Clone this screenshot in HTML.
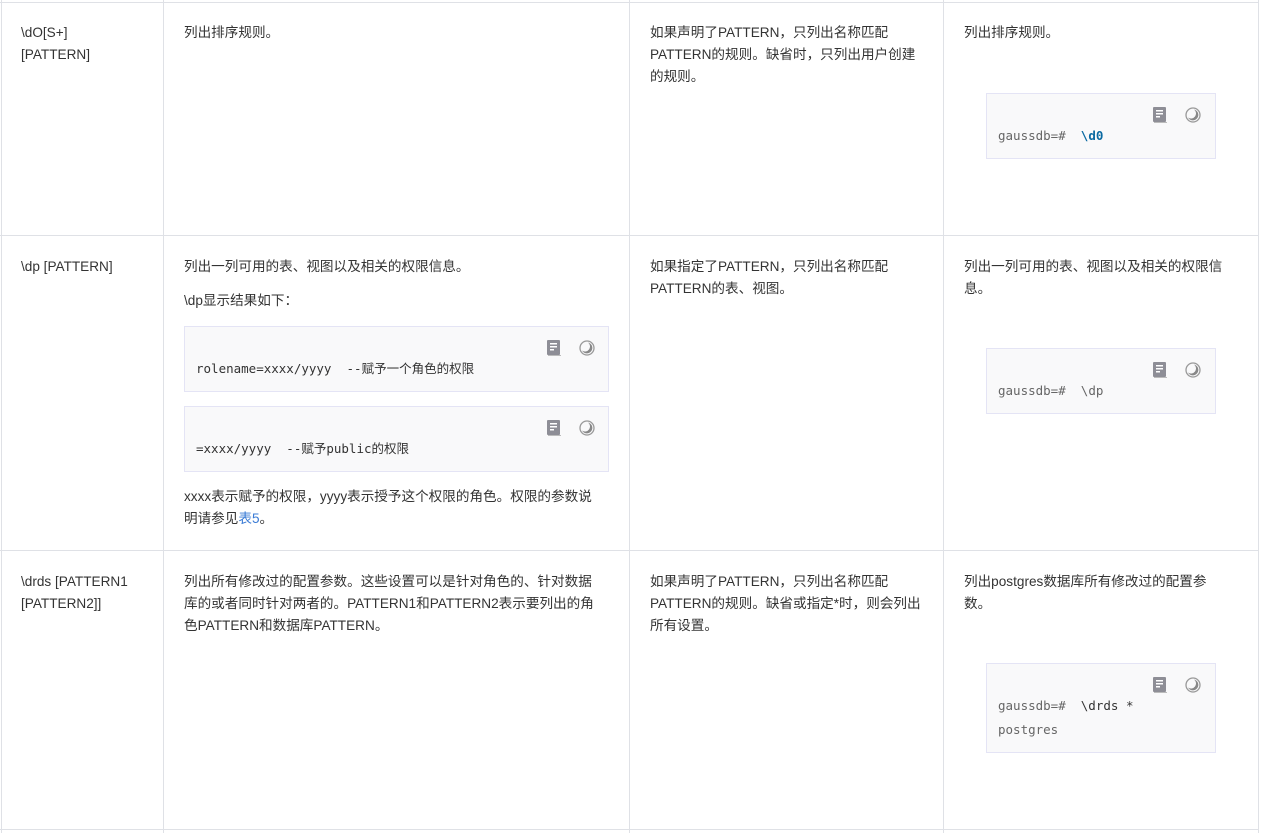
<!DOCTYPE html>
<html><head><meta charset="utf-8"><style>
body{margin:0;width:1262px;height:833px;background:#fff;position:relative;overflow:hidden;font-family:"Liberation Sans","Noto Sans CJK SC",sans-serif;font-size:13.6px;color:#333}
.v{position:absolute;top:0;width:1px;height:833px;background:#dfe1e6}
.h{position:absolute;left:0;width:1259px;height:1px;background:#dfe1e6}
.t{position:absolute;line-height:22px;white-space:nowrap}
.box{position:absolute;background:#f9f9fa;border:1px solid #e4e4f5;box-sizing:border-box}
.code{position:absolute;font-family:"DejaVu Sans Mono","Noto Sans CJK SC",monospace;font-size:12.5px;line-height:24px;white-space:pre;color:#333}
.g{color:#666}.b{color:#0b6aa2;font-weight:bold}
a{color:#3a7bd5;text-decoration:none}
</style></head><body>
<div class="v" style="left:1px"></div><div class="v" style="left:163px"></div><div class="v" style="left:629px"></div><div class="v" style="left:943px"></div><div class="v" style="left:1258px"></div>
<div class="h" style="top:2px"></div><div class="h" style="top:235px"></div><div class="h" style="top:550px"></div><div class="h" style="top:829px"></div>

<svg width="0" height="0" style="position:absolute"><defs>
<g id="icons"><rect x="0" y="0" width="13" height="15" rx="1" fill="#8e8e96"/><rect x="3" y="3" width="7" height="1.5" fill="#fff"/><rect x="3" y="6" width="7" height="1.5" fill="#fff"/><rect x="3" y="9" width="4" height="1.5" fill="#fff"/><rect x="1" y="15" width="13" height="1" fill="#bbb"/>
<circle cx="40" cy="8" r="7" fill="none" stroke="#999" stroke-width="1.3"/><path d="M41 2.5a5.5 5.5 0 1 1-6 8a5 5 0 0 0 6-8z" fill="#888"/></g></defs></svg>

<!-- row 1 -->
<div class="t" style="left:21px;top:22px">\dO[S+]<br>[PATTERN]</div>
<div class="t" style="left:184px;top:22px">列出排序规则。</div>
<div class="t" style="left:650px;top:22px">如果声明了PATTERN，只列出名称匹配<br>PATTERN的规则。缺省时，只列出用户创建<br>的规则。</div>
<div class="t" style="left:964px;top:22px">列出排序规则。</div>
<div class="box" style="left:986px;top:93px;width:230px;height:66px"><svg style="position:absolute;left:166px;top:13px" width="50" height="17"><use href="#icons"/></svg><div class="code" style="left:11px;top:30px"><span class="g">gaussdb=#</span>  <span class="b">\d0</span></div></div>

<!-- row 2 -->
<div class="t" style="left:21px;top:256px">\dp [PATTERN]</div>
<div class="t" style="left:184px;top:256px">列出一列可用的表、视图以及相关的权限信息。</div>
<div class="t" style="left:184px;top:290px">\dp显示结果如下：</div>
<div class="box" style="left:184px;top:326px;width:425px;height:66px"><svg style="position:absolute;left:362px;top:13px" width="50" height="17"><use href="#icons"/></svg><div class="code" style="left:11px;top:30px">rolename=xxxx/yyyy  --赋予一个角色的权限</div></div>
<div class="box" style="left:184px;top:406px;width:425px;height:66px"><svg style="position:absolute;left:362px;top:13px" width="50" height="17"><use href="#icons"/></svg><div class="code" style="left:11px;top:30px">=xxxx/yyyy  --赋予public的权限</div></div>
<div class="t" style="left:184px;top:486px">xxxx表示赋予的权限，yyyy表示授予这个权限的角色。权限的参数说<br>明请参见<a>表5</a>。</div>
<div class="t" style="left:650px;top:256px">如果指定了PATTERN，只列出名称匹配<br>PATTERN的表、视图。</div>
<div class="t" style="left:964px;top:256px">列出一列可用的表、视图以及相关的权限信<br>息。</div>
<div class="box" style="left:986px;top:348px;width:230px;height:66px"><svg style="position:absolute;left:166px;top:13px" width="50" height="17"><use href="#icons"/></svg><div class="code" style="left:11px;top:30px"><span class="g">gaussdb=#</span>  <span class="g">\dp</span></div></div>

<!-- row 3 -->
<div class="t" style="left:21px;top:571px">\drds [PATTERN1<br>[PATTERN2]]</div>
<div class="t" style="left:184px;top:571px">列出所有修改过的配置参数。这些设置可以是针对角色的、针对数据<br>库的或者同时针对两者的。PATTERN1和PATTERN2表示要列出的角<br>色PATTERN和数据库PATTERN。</div>
<div class="t" style="left:650px;top:571px">如果声明了PATTERN，只列出名称匹配<br>PATTERN的规则。缺省或指定*时，则会列出<br>所有设置。</div>
<div class="t" style="left:964px;top:571px">列出postgres数据库所有修改过的配置参<br>数。</div>
<div class="box" style="left:986px;top:663px;width:230px;height:90px"><svg style="position:absolute;left:166px;top:13px" width="50" height="17"><use href="#icons"/></svg><div class="code" style="left:11px;top:30px"><span class="g">gaussdb=#</span>  \drds *
<span class="g">postgres</span></div></div>
</body></html>
